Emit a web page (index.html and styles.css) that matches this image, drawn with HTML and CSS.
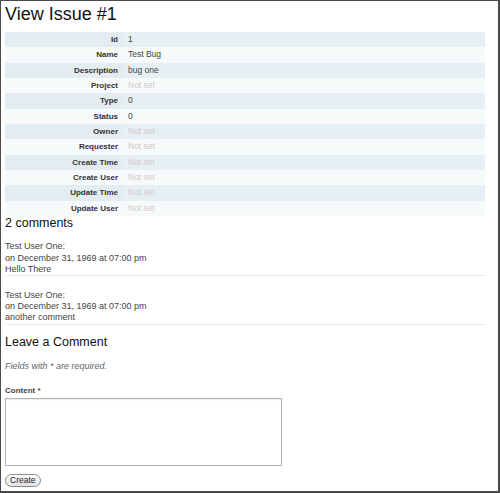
FILE: index.html
```html
<!DOCTYPE html>
<html>
<head>
<meta charset="utf-8">
<link rel="stylesheet" href="styles.css">
</head>
<body>
<div class="frame">
  <h1 class="title">View Issue #1</h1>
  <table class="detail">
    <tr class="odd"><th>Id</th><td>1</td></tr>
    <tr class="even"><th>Name</th><td>Test Bug</td></tr>
    <tr class="odd"><th>Description</th><td>bug one</td></tr>
    <tr class="even"><th>Project</th><td class="null">Not set</td></tr>
    <tr class="odd"><th>Type</th><td>0</td></tr>
    <tr class="even"><th>Status</th><td>0</td></tr>
    <tr class="odd"><th>Owner</th><td class="null">Not set</td></tr>
    <tr class="even"><th>Requester</th><td class="null">Not set</td></tr>
    <tr class="odd"><th>Create Time</th><td class="null">Not set</td></tr>
    <tr class="even"><th>Create User</th><td class="null">Not set</td></tr>
    <tr class="odd"><th>Update Time</th><td class="null">Not set</td></tr>
    <tr class="even"><th>Update User</th><td class="null">Not set</td></tr>
  </table>
  <h3 class="subhead">2 comments</h3>
  <div class="comments">
    <div class="comment">
      <div>Test User One:</div>
      <div>on December 31, 1969 at 07:00 pm</div>
      <div>Hello There</div>
    </div>
    <div class="comment">
      <div>Test User One:</div>
      <div>on December 31, 1969 at 07:00 pm</div>
      <div>another comment</div>
    </div>
  </div>
  <h3 class="subhead leave">Leave a Comment</h3>
  <p class="note">Fields with * are required.</p>
  <form class="form">
    <label class="label">Content *</label>
    <textarea class="area"></textarea>
    <button type="button" class="btn">Create</button>
  </form>
</div>
</body>
</html>
```
FILE: styles.css
```css
html, body {
  margin: 0;
  padding: 0;
  background: #fff;
}
body {
  font-family: "Liberation Sans", Arial, sans-serif;
  color: #222;
}
.frame {
  box-sizing: border-box;
  width: 500px;
  height: 493px;
  border: 1px solid #4a4a4a;
  border-width: 1px 2px 2px 1px;
  padding: 0 0 0 4px;
  overflow: hidden;
}
.title {
  font-size: 18px;
  font-weight: normal;
  margin: 2px 0 0 0;
  line-height: 22px;
  color: #111;
}
.detail {
  margin-top: 7px;
  width: 480px;
  border-collapse: collapse;
}
.detail th, .detail td {
  height: 15.33px;
  padding: 0 5px;
  line-height: 11px;
  box-sizing: border-box;
}
.detail th {
  width: 118px;
  text-align: right;
  font-weight: bold;
  font-size: 8px;
  color: #333;
}
.detail td {
  text-align: left;
  font-size: 8.5px;
  color: #444;
}
.detail tr.odd { background: #e6eff3; }
.detail tr.odd th { background: #e3ecf0; }
.detail tr.even { background: #f6fafb; }
.detail td.null { color: #d3c9c9; }
.subhead {
  font-size: 12.5px;
  font-weight: normal;
  margin: 0;
  line-height: 15px;
  color: #111;
}
.comments {
  width: 480px;
}
.comment {
  font-size: 9px;
  line-height: 11.2px;
  color: #444;
  padding-top: 14px;
  border-bottom: 1px solid #dde9ee;
}
.comment:first-child { padding-top: 10.5px; }
.leave { margin-top: 10.5px; }
.note {
  font-size: 9px;
  font-style: italic;
  color: #666;
  margin: 10.3px 0 0;
  line-height: 12px;
}
.form {
  margin-top: 13.5px;
  display: flex;
  flex-direction: column;
  align-items: flex-start;
}
.label {
  font-size: 8px;
  font-weight: bold;
  color: #444;
  line-height: 10px;
}
.area {
  margin: 2px 0 0;
  width: 277px;
  height: 68px;
  box-sizing: border-box;
  border: 1px solid #b4b4b4;
  box-shadow: inset 0 1px 1px rgba(0,0,0,0.08);
  resize: none;
}
.btn {
  margin-top: 8.5px;
  font-family: "Liberation Sans", Arial, sans-serif;
  font-size: 8.5px;
  padding: 0 4px;
  height: 13px;
  line-height: 11px;
  border: 1px solid #8a8a8a;
  border-radius: 7px;
  background: linear-gradient(#fff, #e2e2e2);
  color: #222;
}
```
